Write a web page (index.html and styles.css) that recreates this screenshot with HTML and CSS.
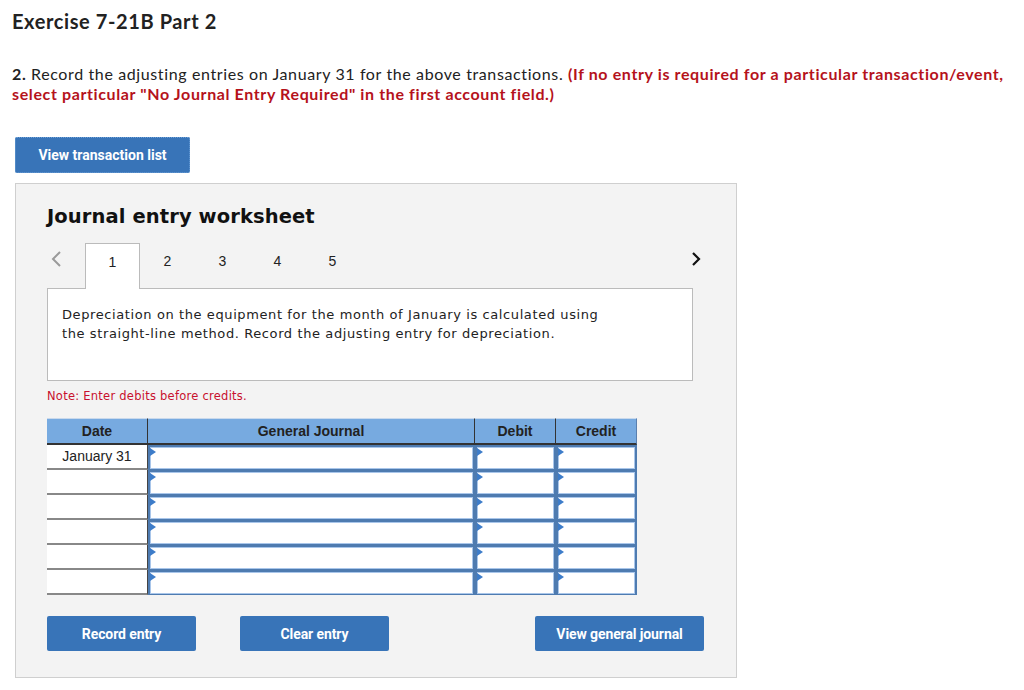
FILE: index.html
```html
<!DOCTYPE html>
<html lang="en">
<head>
    <meta charset="UTF-8">
    <title>Exercise 7-21B Part 2</title>
    <link rel="stylesheet" href="styles.css">
</head>
<body>

<h1 class="title">Exercise 7-21B Part 2</h1>

<p class="question"><b>2.</b> Record the adjusting entries on January 31 for the above transactions. <span class="hint">(If no entry is required for a particular transaction/event, select particular "No Journal Entry Required" in the first account field.)</span></p>

<button class="btn btn-list">View transaction list</button>

<div class="worksheet">
    <h2 class="ws-title">Journal entry worksheet</h2>

    <div class="tabs">
        <span class="arrow arrow-prev">
            <svg width="12" height="18" viewBox="0 0 12 18"><path d="M10 2 L3 9 L10 16" fill="none" stroke="#9a9a9a" stroke-width="2"/></svg>
        </span>
        <span class="tab active">1</span>
        <span class="tab">2</span>
        <span class="tab">3</span>
        <span class="tab">4</span>
        <span class="tab">5</span>
        <span class="arrow arrow-next">
            <svg width="12" height="18" viewBox="0 0 12 18"><path d="M3 3 L9 9 L3 15" fill="none" stroke="#111" stroke-width="2.2"/></svg>
        </span>
    </div>

    <div class="task">
        Depreciation on the equipment for the month of January is calculated using<br>
        the straight-line method. Record the adjusting entry for depreciation.
    </div>

    <p class="note">Note: Enter debits before credits.</p>

    <div class="journal">
        <div class="head">Date</div>
        <div class="head">General Journal</div>
        <div class="head">Debit</div>
        <div class="head head-last">Credit</div>

        <div class="date">January 31</div>
        <div class="field"><div class="box"></div></div>
        <div class="field"><div class="box"></div></div>
        <div class="field"><div class="box"></div></div>

        <div class="date"></div>
        <div class="field"><div class="box"></div></div>
        <div class="field"><div class="box"></div></div>
        <div class="field"><div class="box"></div></div>

        <div class="date"></div>
        <div class="field"><div class="box"></div></div>
        <div class="field"><div class="box"></div></div>
        <div class="field"><div class="box"></div></div>

        <div class="date"></div>
        <div class="field"><div class="box"></div></div>
        <div class="field"><div class="box"></div></div>
        <div class="field"><div class="box"></div></div>

        <div class="date"></div>
        <div class="field"><div class="box"></div></div>
        <div class="field"><div class="box"></div></div>
        <div class="field"><div class="box"></div></div>

        <div class="date"></div>
        <div class="field"><div class="box"></div></div>
        <div class="field"><div class="box"></div></div>
        <div class="field"><div class="box"></div></div>
    </div>

    <div class="actions">
        <button class="btn btn-act">Record entry</button>
        <button class="btn btn-act">Clear entry</button>
        <button class="btn btn-act btn-journal">View general journal</button>
    </div>
</div>

</body>
</html>
```

FILE: styles.css
```css
body { margin: 0; padding: 0 12px; font-family: Lato, 'Open Sans', sans-serif; color: #222; background: #fff; }
.title { margin: 0; padding-top: 9px; font-size: 20px; line-height: 24px; font-weight: 700; color: #222; letter-spacing: 0.6px; }
.question { margin: 31px 0 0; font-size: 16px; line-height: 20px; color: #222; letter-spacing: 0.62px; }
.question b { font-weight: 700; }
.hint { color: #b5121b; font-weight: 700; }

.btn { border: none; border-radius: 2px; background: #3874b8; color: #fff; font-family: Roboto, 'Liberation Sans', sans-serif; font-weight: 700; font-size: 14px; letter-spacing: -0.1px; cursor: pointer; }
.btn-list { display: block; margin: 33px 0 0 3px; width: 175px; height: 36px; letter-spacing: 0; outline: 1px dotted #6b9fd6; outline-offset: -1px; }

.worksheet { margin: 10px 0 0 3px; width: 689px; padding: 0 0 26px 31px; background: #f3f3f3; border: 1px solid #cfcfcf; }
.ws-title { margin: 0; padding-top: 21px; font-family: 'DejaVu Sans', Verdana, sans-serif; font-size: 19.5px; line-height: 24px; font-weight: 700; color: #111; letter-spacing: 0.1px; }

.tabs { display: flex; height: 45px; margin-top: 14px; width: 646px; }
.tab { width: 55px; padding-top: 9px; box-sizing: border-box; text-align: center; font-family: 'Liberation Sans', Arial, sans-serif; font-size: 14px; line-height: 18px; color: #222; }
.tab.active { width: 55px; background: #fff; border: 1px solid #bbb; border-bottom: none; height: 46px; position: relative; z-index: 1; margin-bottom: -1px; }
.arrow { padding-top: 7px; }
.arrow-prev { width: 38px; padding-left: 3px; box-sizing: border-box; }
.arrow-next { margin-left: auto; margin-right: -9px; }

.task { width: 615px; height: 59px; padding: 16px 15px 16px 14px; background: #fff; border: 1px solid #bbb; font-family: 'DejaVu Sans', Verdana, sans-serif; font-size: 13px; line-height: 19px; color: #222; letter-spacing: 0.6px; }

.note { margin: 7px 0 0; font-family: 'DejaVu Sans', Verdana, sans-serif; font-size: 11.5px; line-height: 16px; color: #c8102e; letter-spacing: 0.25px; }

.journal { display: grid; grid-template-columns: 101px 327px 81px 81px; grid-auto-rows: 25px; grid-template-rows: 27px; margin-top: 14px; font-family: 'Liberation Sans', Arial, sans-serif; font-size: 14px; color: #222; }
.head { display: flex; align-items: center; justify-content: center; background: #77aae0; font-weight: 700; border-right: 1px solid #333; border-bottom: 2px solid #333; border-top: 1px solid #c9d9ec; }
.head-last { border-right: 1px solid #5a7fae; }
.date { display: flex; align-items: center; justify-content: center; padding-bottom: 1px; background: #fff; border-bottom: 2px solid #888; border-right: 1px solid #444; }
.field { background: #4e7bb0; padding: 2px 2px 1px 2px; }
.box { position: relative; height: 100%; background: #fff; border: 1px solid #a9c6ea; box-sizing: border-box; }
.box::before { content: ""; position: absolute; left: -1px; top: 0; border-left: 6px solid #3d7cc9; border-top: 4px solid transparent; border-bottom: 4px solid transparent; }

.actions { display: flex; margin-top: 21px; width: 657px; }
.btn-act { width: 149px; height: 35px; margin-right: 44px; }
.btn-journal { margin-left: auto; margin-right: 0; width: 169px; }
```
